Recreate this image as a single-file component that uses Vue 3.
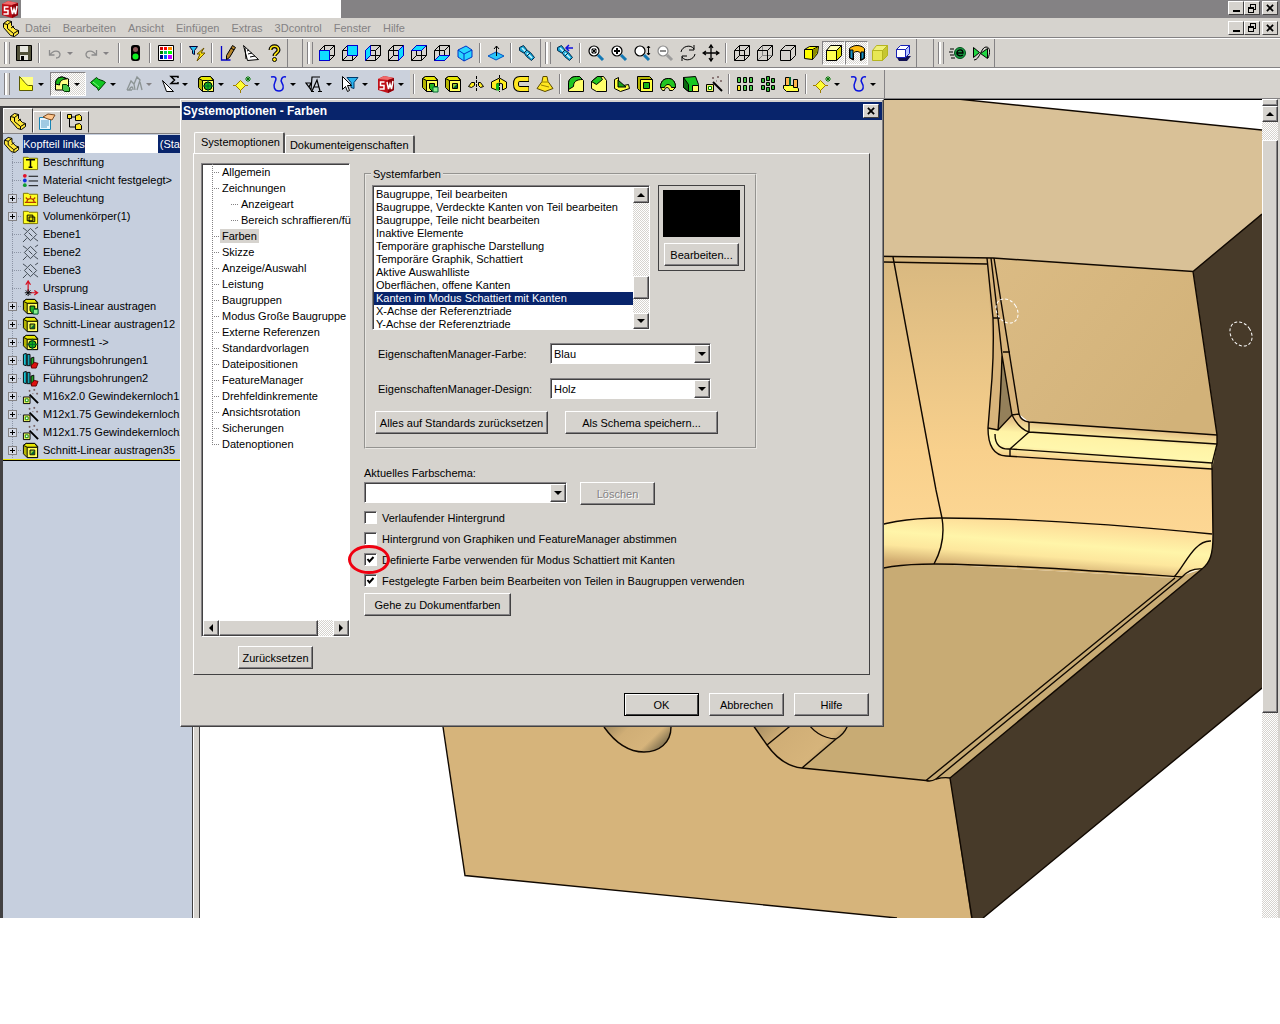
<script setup>
import { ref } from 'vue'

// wire cube with one coloured face
const wire = (face = '', edge = '#0000d0') =>
  `<path d="M1.5 6.5h10v10h-10zM6.5 1.5h10v10h-10zM1.5 6.5l5-5M11.5 6.5l5-5M11.5 16.5l5-5M1.5 16.5l5-5" fill="none" stroke="#000"/>` +
  (face ? `<path d="${face}" fill="#10dcff" stroke="${edge}"/>` : '')

// solid cube: front, top and side
const cube = (front, top, side, line = '#000') =>
  `<path d="M1.5 6.5h10v10h-10z" fill="${front}" stroke="${line}"/><path d="M1.5 6.5l4-5h11l-5 5z" fill="${top}" stroke="${line}"/><path d="M11.5 6.5l5-5v10l-5 5z" fill="${side}" stroke="${line}"/>`

// yellow block seen from the left, used by the feature icons
const block = (inner) =>
  `<path d="M1.5 3.5l3-2h9l3 3v12h-11l-4-4z" fill="#b5b500" stroke="#000"/><path d="M5.5 5.5h11v11h-11z" fill="#ffff5a" stroke="#000"/><path d="M1.5 3.5l3-2h9l3 4h-11z" fill="#e8e800" stroke="#000"/>` + inner

const lens = (inner, c = '#000', h = '#1478b4') =>
  `<circle cx="7" cy="7" r="5" fill="#fff" stroke="${c}" stroke-width="1.2"/><path d="M11 11l5 5" stroke="${h}" stroke-width="3"/>${inner}`

const scope = '<path d="M1.5 3.5l4-2 4 5 3 2 4 5-3 3-5-4-2-3-5-3z" fill="#18a5d6" stroke="#00294a"/><path d="M4 4l4 4M9 9l5 5" stroke="#c6f7ff" stroke-width="1.6"/><path d="M6 9l3-3M9 12l3-3" stroke="#00294a"/>'
const wand = '<path d="M8 7l9 9" stroke="#000" stroke-width="2"/><path d="M1.5 9.5h7v7h-7z" fill="#f4f46a" stroke="#000"/><path d="M3.5 11.5h3v3h-3z" fill="#fff" stroke="#080"/><path d="M7 3h2M8 2v2M12 2h2M13 1v2M15 6h2M16 5v2M11 6h1" stroke="#735a5a"/>'
const part = '<path d="M1.5 4.5l4-3 4 1v4l4 4 3 1v3l-4 3-4-1-7-8z" fill="#ffe73a" stroke="#000"/><path d="M1.5 4.5l4 1 4-3M5.5 5.5v4l6 5 5-3M11.5 14.5v3M9 9l3-2" stroke="#000" fill="none"/>'
const swLogo = '<path d="M1 4l6-3 10 2v12l-6 3L1 15z" fill="#c01018"/><path d="M1 4l6-3 10 2-6 2z" fill="#ef6b6b"/><path d="M11 5l6-2v12l-6 3z" fill="#8f0008"/><path d="M7.5 7h-4v3.5h3.500V14h-4.500M10 7l1.500 7 1.500-5 1.500 5L16 6" stroke="#fff" stroke-width="1.5" fill="none"/>'
const star = '<path d="M7.5 5.5l5 5-5 5-5-5z" fill="#ff3" stroke="#9c7b00"/><path d="M0 10.5h3M12 10.5h3M7.5 15v3" stroke="#9c7b00"/><path d="M12 4h6M15 1v6M13 2l4 4M17 2l-4 4" stroke="#087808"/>'
const curve = '<path d="M2 2c5-1 6 1 4 5s-1 9 4 9 5-5 3-8 0-7 4-6" fill="none" stroke="#0a14e0" stroke-width="1.5"/>'
const plane = '<path d="M9 2.5l6.500 6.500L9 15.500 2.500 9zM1 2l4 3M17 16l-4-3M7 7l4 4M14 3l3-2M1 17l4-4" fill="none" stroke="#39424a"/>'
const extrude = block('<path d="M8.5 8.5h5v3h3v5h-5l-3-3z" fill="#21b521" stroke="#000"/><path d="M12 12h5v5h-5z" fill="#8cf08c" stroke="#063"/>')
const cut = block('<path d="M8.5 8.5h5v5h-5z" fill="#9ccf31" stroke="#000"/><path d="M9 13l4-4v4z" fill="#063"/>')
const cavity = block('<circle cx="11" cy="11" r="4" fill="#18b518" stroke="#000"/><path d="M5 11h12M11 5v12" stroke="#063"/>')
const books = '<path d="M1.5 2.5l3-1v13l-3-1z" fill="#18c5d6" stroke="#000"/><path d="M5.5 2.5h3v12h-3z" fill="#18a5b5" stroke="#000"/><path d="M9.5 6.5l3-1v10h-3z" fill="#21a521" stroke="#000"/><path d="M10 14l3-3 4 1-2 5h-5z" fill="#e01010" stroke="#600"/>'
const folder = (inner) => `<path d="M1.5 3.5h5l1 1h9v12h-15z" fill="#ffff21" stroke="#7b7300"/>${inner}`

const icons = {
  sw: swLogo,
  part,
  save: '<path d="M1.5 1.5h15v15h-15z" fill="#52523a" stroke="#000"/><path d="M5 2h8v6H5zM5 11h8v5H5z" fill="#e7e7e0"/><path d="M6 12h3v4H6z" fill="#000"/>',
  undo: '<path d="M3.5 6v5h5M4 11c3-5 9-5 10-1 0 3-2 4-4 4" fill="none" stroke="#8c8c8c" stroke-width="1.3"/>',
  redo: '<path d="M14.5 6v5h-5M14 11c-3-5-9-5-10-1 0 3 2 4 4 4" fill="none" stroke="#8c8c8c" stroke-width="1.3"/>',
  light: '<rect x="5" y="1" width="9" height="16" rx="3" fill="#000"/><circle cx="9.5" cy="5.5" r="2.5" fill="#8c5a5a"/><circle cx="9.5" cy="12.5" r="3" fill="#10ef21"/>',
  palette: '<path d="M1.5 1.5h15v15h-15z" fill="#fff" stroke="#000"/><path d="M3 3h3v3H3z" fill="#c00"/><path d="M7 3h3v3H7z" fill="#f00"/><path d="M11 3h4v3h-4z" fill="#f80"/><path d="M3 7h3v3H3z" fill="#080"/><path d="M7 7h3v3H7z" fill="#0c6"/><path d="M11 7h4v3h-4z" fill="#0f0"/><path d="M3 11h3v4H3z" fill="#008"/><path d="M7 11h3v4H7z" fill="#06f"/><path d="M11 11h4v4h-4z" fill="#c0f"/>',
  rebuild: '<path d="M1.5 2.5h8l-3 4v4l-2-1v-3z" fill="#29c5f7" stroke="#003"/><path d="M16 4l-7 6h3l-3 7 8-8h-4z" fill="#ffe710" stroke="#6b5200"/>',
  sketch: '<path d="M2.5 2v14h9" fill="none" stroke="#0000c8" stroke-width="1.3"/><path d="M13.5 1.5l3 2-6 10-3 2v-4z" fill="#b58429" stroke="#000"/><path d="M12 4l3 2" stroke="#000"/>',
  ruler: '<path d="M1.5 1.5l15 14-11 1z" fill="#fff" stroke="#000"/><path d="M3 4l1 11M5 7l2-1M6 10l4-1M8 13l5-1" fill="none" stroke="#000"/>',
  help: '<path d="M5.5 6c0-5 8-5 8 0 0 3-4 3-4 6" fill="none" stroke="#000" stroke-width="4"/><path d="M5.5 6c0-5 8-5 8 0 0 3-4 3-4 6" fill="none" stroke="#ffe710" stroke-width="1.6"/><circle cx="9.5" cy="15.5" r="2" fill="#ffe710" stroke="#000"/>',
  front: wire('M1.5 6.5h10v10h-10z'),
  back: wire('M6.5 1.5h10v10h-10z'),
  left: wire('M1.5 6.5l5-5v10l-5 5z'),
  right: wire('M11.5 6.5l5-5v10l-5 5z'),
  top: wire('M1.5 6.5l5-5h10l-5 5z'),
  bottom: wire('M1.5 16.5l5-5h10l-5 5z'),
  iso: '<path d="M2 6l8-4 6 4v7l-8 4-6-4z" fill="#29d6ff" stroke="#0031c6"/><path d="M2 6l6 4 8-4M8 10v7" fill="none" stroke="#0031c6"/>',
  normal: '<path d="M1 12l8-4 8 4-8 4z" fill="#29c5f7" stroke="#0052c6"/><path d="M9.5 12V2M7 5l2.500-3L12 5" fill="none" stroke="#000"/>',
  scope,
  scopeBack: scope + '<path d="M17 4h-6M13 1l-3 3 3 3" stroke="#1010e0" stroke-width="1.5" fill="none"/>',
  zoomFit: lens('<path d="M5 5h4v4H5zM5 5l4 4M9 5L5 9" stroke="#000" fill="none"/>'),
  zoomIn: lens('<path d="M4 7h6M7 4v6" stroke="#000" stroke-width="2"/>'),
  zoomDyn: lens('<path d="M15.5 2v9M14 4l1.500-2L17 4M14 9l1.500 2L17 9" stroke="#000" fill="none"/>'),
  zoomSel: lens('<path d="M4 7h6" stroke="#8c8c8c" stroke-width="2"/>', '#8c8c8c', '#9c9c9c'),
  rotate: '<path d="M2 8c1-6 10-8 13-3M16 10c-1 6-10 8-13 3M15 1v5h-5M3 17v-5h5" fill="none" stroke="#000"/>',
  pan: '<path d="M9 2v14M2 9h14M7 4l2-3 2 3M7 14l2 3 2-3M4 7L1 9l3 2M14 7l3 2-3 2" fill="none" stroke="#000" stroke-width="1.3"/>',
  wireframe: wire(),
  hiddenGray: '<path d="M6.5 1.5v10h10M1.5 16.5l5-5" fill="none" stroke="#848484"/><path d="M1.5 6.5h10v10h-10zM1.5 6.5l5-5h10v10l-5 5M11.5 6.5l5-5" fill="none" stroke="#000"/>',
  hidden: '<path d="M1.5 6.5h10v10h-10zM1.5 6.5l5-5h10v10l-5 5M11.5 6.5l5-5" fill="none" stroke="#000"/>',
  shadedEdge: '<path d="M2.5 5.5l5-3h9l-1 7-5 6-8-1z" fill="#ffff00" stroke="#000"/><path d="M2.5 5.5h8v10M10.5 5.5l6-3" fill="none" stroke="#000"/><path d="M11 6l5-3-1 6-4 5z" fill="#8c8c00"/>',
  shaded: cube('#ffff52', '#ffffb5', '#dede00'),
  section: '<path d="M1.5 4.5c4-4 11-4 15 0v10l-4 2V9c-2-2-5-2-7 0v7l-4-2z" fill="#ffbd10" stroke="#000"/><path d="M2 6h3v9l-3-1zM13 8h3v6l-3 2z" fill="#1894c6" stroke="#000"/>',
  shadow: cube('#e7e754', '#f0f07a', '#c6c631', '#b5b521'),
  shadowFloor: '<path d="M2 12h15l-4 5H5z" fill="#101052"/><path d="M2.500 5.500h9v8h-9z" fill="#fff" stroke="#1821b5"/><path d="M2.500 5.500l4-4h9l-4 4z" fill="#fff" stroke="#1821b5"/><path d="M11.500 5.500l4-4v8l-4 4z" fill="#b5c6ff" stroke="#1821b5"/>',
  edraw: '<circle cx="11" cy="9" r="5.5" fill="#189c42" stroke="#00521b"/><path d="M8 9h6c0-4-5-4-6-1s3 5 6 3" stroke="#000" fill="none" stroke-width="1.3"/><path d="M1 5h4M0 8h4M1 11h4M2 14h4" stroke="#000"/>',
  animate: '<path d="M1.500 3.500v10l6-5zM8.500 9.500l7-5v10z" fill="#21d642" stroke="#000"/><path d="M2 16c6 0 7-13 12-13s4 7 2 11" fill="none" stroke="#000"/>',
  sketchYellow: '<path d="M2 2h14v14H2z" fill="#ffff84"/><path d="M2.500 1.500v14h13v-5h-4c-2 0-5-5-9-9z" fill="#ffff21" stroke="#5a5a00"/>',
  feature: '<path d="M2.500 9c0-5 3-7 7-7l6 2v8l-4 3h-9z" fill="#ffff84" stroke="#000"/><path d="M2.500 9c0-5 3-7 7-7l4 2c-4 0-7 2-7 6z" fill="#18b518" stroke="#000"/><path d="M9.500 9.500h4l3 3v4h-5l-2-2z" fill="#4ac64a" stroke="#003900"/>',
  surface: '<path d="M1.500 7.500l6-5c2 3 6 2 9 5l-7 8c-1-4-5-4-8-8z" fill="#10c621" stroke="#003900"/><path d="M4 7l6 5" stroke="#7bff7b"/>',
  mold: '<path d="M2 15l4-9 3 3 3-7 3 3-3 10M4 15c2-4 4-4 4 0M15 7l2 8M2 15h5M9 9l1 6" fill="none" stroke="#8c9494" stroke-width="1.3"/>',
  sigma: '<path d="M1.500 5.500l11 11h-7z" fill="#fff" stroke="#000"/><path d="M17 3V1.500h-7l3.500 3.500-3.500 3.500h7V7" fill="none" stroke="#000" stroke-width="1.5"/>',
  cavity,
  star,
  curve,
  annot: '<path d="M1 8h5l-2 4zM4 12l2 3 1-13h8M7 16l5-11 3 11M9 12h5M6 16.500h3M13 16.500h4" fill="none" stroke="#000" stroke-width="1.2"/>',
  filter: '<path d="M6 2.500h11l-4 5v6l-3-1v-5z" fill="#29b5ef" stroke="#00396b"/><path d="M1.500 1.500v13l3-3 2 5 2-1-2-5h4z" fill="#fff" stroke="#000"/>',
  extrude,
  cut,
  revolve: '<path d="M1.500 11.500l3-4h3v3l-3 2zM11.500 7.500h2l3 4-3 1-2-2z" fill="#ffef21" stroke="#000"/><path d="M9.500 1v16" stroke="#000" stroke-dasharray="3 1"/>',
  revolveCut: '<path d="M1.500 7l8-4 7 4v6l-4 2V9l-3-1-3 1v6l-5-2z" fill="#ffef21" stroke="#000"/><path d="M6 9l3-1v8l-3-1z" fill="#18b518"/><path d="M9.500 0v17" stroke="#000" stroke-dasharray="3 1"/>',
  sweep: '<path d="M16 4H7c-3 0-4 2-4 5s1 5 4 5h9" fill="none" stroke="#000" stroke-width="6"/><path d="M15.500 4H7c-3 0-4 2-4 5s1 5 4 5h8.500" fill="none" stroke="#ffe721" stroke-width="4"/>',
  loft: '<path d="M7 1.500h4l1 5 5 7-8 3-8-3 5-7z" fill="#ffe721" stroke="#5a4a00"/><path d="M6 7h6M5 10l8 2" stroke="#9c8400"/>',
  fillet: '<path d="M1.500 9c0-5 3-7.500 8-7.500h3l4 4v11h-15z" fill="#ffff6b" stroke="#000"/><path d="M1.500 9c0-5 3-7.500 8-7.500h3l3 3c-6 0-9 2-9 7l-5 3z" fill="#21c621" stroke="#000"/>',
  chamfer: '<path d="M1.500 6.500l6-5h6l3 4v11h-10l-5-3z" fill="#ffff6b" stroke="#000"/><path d="M1.500 6.500l6-5h3l2 3-6 5z" fill="#21c621" stroke="#000"/>',
  rib: '<path d="M1.500 4.500l4-2v9l10-2 1 4-9 3-6-3z" fill="#ffff42" stroke="#000"/><path d="M5 12V5l8 7z" fill="#18a518" stroke="#000"/>',
  shell: '<path d="M1.500 1.500h12l3 3v12h-12l-3-3z" fill="#b5b500" stroke="#000"/><path d="M4.500 4.500h12v12h-12z" fill="#ffff42" stroke="#000"/><path d="M7.500 7.500h6v6h-6z" fill="#18b518" stroke="#000"/>',
  dome: '<path d="M1.500 12.500c0-6 3-9 8-9 4 0 7 3 7 9l-3 3h-3c0-4-5-4-5 0h-2z" fill="#ffff42" stroke="#000"/><path d="M1.500 12.500c0-6 3-9 8-9 4 0 7 3 7 9h-4c-1-4-6-4-7 0z" fill="#21c621" stroke="#000"/>',
  draft: '<path d="M1.500 2.500l12-1 3 8v7h-10l-5-4z" fill="#18c621" stroke="#000"/><path d="M1.500 2.500l5 7v7l-5-4z" fill="#086b10" stroke="#000"/><path d="M10.500 10.500h6v6h-6z" fill="#ffff6b" stroke="#000"/>',
  wand,
  linPattern: [1, 7, 13].map((x) => `<path d="M${x}.500 2.500h3v5h-3zM${x}.500 10.500h3v5h-3z" fill="#4ac64a" stroke="#000"/>`).join('') + '<path d="M2 11h2v4H2z" fill="#ffe721"/>',
  circPattern: '<path d="M7.500 1.500h3v4h-3zM7.500 12.500h3v4h-3zM2.500 3.500h3v4h-3zM12.500 3.500h3v4h-3zM2.500 10.500h3v4h-3zM12.500 10.500h3v4h-3zM7.500 7.500h3v3h-3z" fill="#31b531" stroke="#000"/>',
  mirror: '<path d="M1.500 10.500h11l4 3v3h-12l-3-3z" fill="#ffff42" stroke="#000"/><path d="M3.500 2.500h4v8h-4zM11.500 4.500h4v8h-4z" fill="#ffb54a" stroke="#000"/><path d="M8 2v9" stroke="#063" stroke-width="2"/>',
  tabProps: '<path d="M1.500 4.500h11v12h-11z" fill="#e7f7ff" stroke="#1884b5"/><path d="M3 8h8M3 10h8M3 12h8M3 14h6" stroke="#5a9cc6"/><path d="M5 4l5-3 7 1-3 5-4-1z" fill="#ffc68c" stroke="#7b4a21"/>',
  tabConf: '<path d="M3.500 2v12h6M3.500 4h6" fill="none" stroke="#000"/><path d="M1.500 1.500h4v4h-4zM9.500 2.500l4-1 2 2v4h-6zM9.500 11.500l4-1 2 2v4h-6z" fill="#ffe721" stroke="#000"/>',
  note: folder('<path d="M5 7V6h8v1M9 6v8M7 14h4" fill="none" stroke="#000" stroke-width="1.6"/>'),
  material: '<path d="M7 4.500h10M7 9.500h10M7 14.500h10" stroke="#000"/><circle cx="3" cy="4" r="2" fill="#e01029"/><circle cx="3" cy="9" r="2" fill="#1031e0"/><circle cx="3" cy="14" r="2" fill="#109c31"/>',
  lights: folder('<path d="M3 13h12M5 13c1-5 7-5 8 0M9 6v3M4 8l2 2M14 8l-2 2" fill="none" stroke="#b53900" stroke-width="1.3"/>'),
  bodies: folder('<path d="M5.500 7.500h6v6h-6zM7.500 9.500h6v5h-6z" fill="#dede00" stroke="#000"/>'),
  plane,
  origin: '<path d="M6.500 12V2M4 5l2.500-4L9 5M8 13.500h8M13 11l3.500 2.500L13 16" fill="none" stroke="#d61021" stroke-width="1.3"/><path d="M4 11l5 5M9 11l-5 5M6.500 10v7M3 13.500h7" stroke="#000"/>',
  books
}

const menus = ['Datei', 'Bearbeiten', 'Ansicht', 'Einfügen', 'Extras', '3Dcontrol', 'Fenster', 'Hilfe']

// '|' is a separator, '+' adds a drop arrow, '!' is a pressed button
const bands = [
  { id: 'std', tools: ['save', '|', 'undo+', 'redo+', '|', 'light', '|', 'palette', '|', 'rebuild', '|', 'sketch', 'ruler', 'help'] },
  { id: 'views', tools: ['front', 'back', 'left', 'right', 'top', 'bottom', 'iso', '|', 'normal', '|', 'scope'] },
  { id: 'view', tools: ['scopeBack', '|', 'zoomFit', 'zoomIn', 'zoomDyn', 'zoomSel', 'rotate', 'pan', '|', 'wireframe', 'hiddenGray', 'hidden', 'shadedEdge', 'shaded!', 'section!', 'shadow', 'shadowFloor'] },
  { id: 'edraw', tools: ['edraw', 'animate'] }
]
const commandTools = ['sketchYellow+', 'feature+!', 'surface+', 'mold+', 'sigma+', 'cavity+', 'star+', 'curve+', 'annot+', 'filter+', 'sw+']
const partTools = ['|', 'extrude', 'cut', 'revolve', 'revolveCut', 'sweep', 'loft', '|', 'fillet', 'chamfer', 'rib', 'shell', 'dome', 'draft', 'wand', '|', 'linPattern', 'circPattern', 'mirror', '|', 'star+', 'curve+']

const parse = (list) => list.map((t) => ({ sep: t === '|', name: t.replace(/[+!]/g, ''), drop: t.includes('+'), on: t.includes('!') }))
const row1 = bands.map((b) => ({ id: b.id, tools: parse(b.tools) }))
const row2 = [
  { id: 'command', tools: parse(commandTools) },
  { id: 'parttools', tools: parse(partTools) }
]

const features = [
  { icon: 'note', text: 'Beschriftung' },
  { icon: 'material', text: 'Material <nicht festgelegt>' },
  { icon: 'lights', text: 'Beleuchtung', plus: true },
  { icon: 'bodies', text: 'Volumenkörper(1)', plus: true },
  { icon: 'plane', text: 'Ebene1' },
  { icon: 'plane', text: 'Ebene2' },
  { icon: 'plane', text: 'Ebene3' },
  { icon: 'origin', text: 'Ursprung' },
  { icon: 'extrude', text: 'Basis-Linear austragen', plus: true },
  { icon: 'cut', text: 'Schnitt-Linear austragen12', plus: true },
  { icon: 'cavity', text: 'Formnest1 ->', plus: true },
  { icon: 'books', text: 'Führungsbohrungen1', plus: true },
  { icon: 'books', text: 'Führungsbohrungen2', plus: true },
  { icon: 'wand', text: 'M16x2.0 Gewindekernloch1', plus: true },
  { icon: 'wand', text: 'M12x1.75 Gewindekernloch1', plus: true },
  { icon: 'wand', text: 'M12x1.75 Gewindekernloch2', plus: true },
  { icon: 'cut', text: 'Schnitt-Linear austragen35', plus: true }
]

const pages = [
  'Allgemein', 'Zeichnungen', '>Anzeigeart', '>Bereich schraffieren/fü', 'Farben', 'Skizze', 'Anzeige/Auswahl',
  'Leistung', 'Baugruppen', 'Modus Große Baugruppe', 'Externe Referenzen', 'Standardvorlagen', 'Dateipositionen',
  'FeatureManager', 'Drehfeldinkremente', 'Ansichtsrotation', 'Sicherungen', 'Datenoptionen'
].map((p) => ({ text: p.replace('>', ''), sub: p.startsWith('>') }))
const page = ref('Farben')

const colors = [
  'Baugruppe, Teil bearbeiten', 'Baugruppe, Verdeckte Kanten von Teil bearbeiten', 'Baugruppe, Teile nicht bearbeiten',
  'Inaktive Elemente', 'Temporäre graphische Darstellung', 'Temporäre Graphik, Schattiert', 'Aktive Auswahlliste',
  'Oberflächen, offene Kanten', 'Kanten im Modus Schattiert mit Kanten', 'X-Achse der Referenztriade', 'Y-Achse der Referenztriade'
]
const color = ref('Kanten im Modus Schattiert mit Kanten')

const checks = ref([
  { id: 'grad', text: 'Verlaufender Hintergrund', on: false },
  { id: 'match', text: 'Hintergrund von Graphiken und FeatureManager abstimmen', on: false },
  { id: 'edges', text: 'Definierte Farbe verwenden für Modus Schattiert mit Kanten', on: true, marked: true },
  { id: 'fixed', text: 'Festgelegte Farben beim Bearbeiten von Teilen in Baugruppen verwenden', on: true }
])
</script>

<template>
  <div class="screen">
    <div class="app">
      <header class="titlebar">
        <svg class="icon" viewBox="0 0 18 18" v-html="icons.sw"></svg>
        <span class="blank"></span>
        <div class="winbtns">
          <button class="winbtn" aria-label="Minimieren"><i class="min"></i></button>
          <button class="winbtn" aria-label="Wiederherstellen"><i class="res"></i></button>
          <button class="winbtn close" aria-label="Schließen"><svg viewBox="0 0 9 9"><path d="M1 1l7 7M8 1L1 8" /></svg></button>
        </div>
      </header>

      <nav class="menubar">
        <svg class="icon" viewBox="0 0 18 18" v-html="icons.part"></svg>
        <button v-for="m in menus" :key="m" class="menu">{{ m }}</button>
        <div class="winbtns">
          <button class="winbtn" aria-label="Dokument minimieren"><i class="min"></i></button>
          <button class="winbtn" aria-label="Dokument wiederherstellen"><i class="res"></i></button>
          <button class="winbtn close" aria-label="Dokument schließen"><svg viewBox="0 0 9 9"><path d="M1 1l7 7M8 1L1 8" /></svg></button>
        </div>
      </nav>

      <div class="toolrow">
        <div v-for="b in row1" :key="b.id" class="band" :class="b.id">
          <template v-for="(t, i) in b.tools" :key="i">
            <span v-if="t.sep" class="sep"></span>
            <button v-else class="tool" :class="{ on: t.on, drop: t.drop }" :aria-label="t.name">
              <svg viewBox="0 0 18 18" v-html="icons[t.name]"></svg>
              <i v-if="t.drop" class="caret dim"></i>
            </button>
          </template>
        </div>
      </div>
      <div class="toolrow second">
        <div v-for="b in row2" :key="b.id" class="band" :class="b.id">
          <template v-for="(t, i) in b.tools" :key="i">
            <span v-if="t.sep" class="sep"></span>
            <button v-else class="tool" :class="{ on: t.on, drop: t.drop }" :aria-label="t.name">
              <svg viewBox="0 0 18 18" v-html="icons[t.name]"></svg>
              <i v-if="t.drop" class="caret" :class="{ dim: t.name === 'mold' }"></i>
            </button>
          </template>
        </div>
      </div>

      <main class="work">
        <aside class="side">
          <div class="sidetabs">
            <button class="sidetab active" aria-label="FeatureManager"><svg viewBox="0 0 18 18" v-html="icons.part"></svg></button>
            <button class="sidetab" aria-label="PropertyManager"><svg viewBox="0 0 18 18" v-html="icons.tabProps"></svg></button>
            <button class="sidetab" aria-label="ConfigurationManager"><svg viewBox="0 0 18 18" v-html="icons.tabConf"></svg></button>
          </div>
          <div class="root">
            <svg viewBox="0 0 18 18" v-html="icons.part"></svg>
            <span class="rootname">Kopfteil links<span class="blank"></span>(Sta</span>
          </div>
          <ul class="features">
            <li v-for="f in features" :key="f.text">
              <span class="branch"><b v-if="f.plus" class="plus"></b></span>
              <svg viewBox="0 0 18 18" v-html="icons[f.icon]"></svg>
              <span>{{ f.text }}</span>
            </li>
          </ul>
        </aside>
        <div class="splitter"></div>

        <svg class="model" viewBox="200 100 1062 818" preserveAspectRatio="xMinYMin slice">
          <defs>
            <linearGradient id="wall" x1="0" y1="0" x2="0" y2="1">
              <stop offset="0" stop-color="#d8b880" />
              <stop offset=".7" stop-color="#f8d08c" />
              <stop offset="1" stop-color="#fdd794" />
            </linearGradient>
            <linearGradient id="back" x1="0" y1="0" x2="1" y2=".6">
              <stop offset="0" stop-color="#dbbb84" />
              <stop offset="1" stop-color="#d2b279" />
            </linearGradient>
            <linearGradient id="round" gradientUnits="userSpaceOnUse" x1="1040" y1="518" x2="1036" y2="572">
              <stop offset="0" stop-color="#fdd794" />
              <stop offset=".45" stop-color="#fff5a9" />
              <stop offset=".7" stop-color="#fde79d" />
              <stop offset="1" stop-color="#d0ab70" />
            </linearGradient>
            <linearGradient id="groove" gradientUnits="userSpaceOnUse" x1="1110" y1="427" x2="1107" y2="464">
              <stop offset="0" stop-color="#e5c187" />
              <stop offset=".35" stop-color="#fff3a6" />
              <stop offset=".7" stop-color="#fff7ad" />
              <stop offset="1" stop-color="#f5cd89" />
            </linearGradient>
            <linearGradient id="hole" x1="0" y1="0" x2="1" y2=".5">
              <stop offset="0" stop-color="#94805a" />
              <stop offset=".4" stop-color="#d0ae76" />
              <stop offset=".8" stop-color="#d6b47b" />
              <stop offset="1" stop-color="#8c7a56" />
            </linearGradient>
          </defs>
          <path fill="#d6b47b" d="M438 690L465 875.500 897 918h76L950 778 900 690z" />
          <path fill="#d9c197" d="M700 99h257l305 31v84l-69 57.500L993 258l-293-4z" />
          <path fill="#473a29" d="M1262 214l-69 57.500L1217 435v9l-5 20 1 72c0 18-3 27-11 33L950 778l21 140h12l279-230z" />
          <path fill="url(#wall)" d="M860 256l133 2 20 180 199 31 1 66-271-17-82 12z" />
          <path fill="url(#back)" d="M994 258l199 13.500L1217 435l-188-13-10-8z" />
          <path fill="#c8ab74" d="M860 575c20-8 40-11 75-11l240 14 27-9L950 778l-14 1q-5 3-10 1.500L802 768l34-29 14-20z" />
          <path fill="url(#round)" d="M860 532c20-9 50-14 82-14 80 0 180 7 270 16 2 16-1 30-11 36q-10-1-20 8l-6 0-240-14c-35 0-55 3-75 11z" />
          <path fill="url(#groove)" d="M1019 414q2 7 10 8l188 13v9l-5 25-206-13q-18-1-18-28l5-70 1-40-7-60h7z" />
          <path fill="#d8b47b" d="M987 258h7l25 156-7 1-14 15-10-1 5-71z" />
          <path fill="#94805a" d="M1002 355l10 59-14 15z" />
          <path fill="url(#hole)" d="M604 720v7c10 14 24 25 40 25 15 0 27-9 27-25v-7z" />
          <path fill="url(#hole)" d="M748 718l6 9c9 14 22 39 48 41l34-29 14-21z" />
          <g class="edges">
            <path d="M442 720L465 875.500 897 918M957 99l305 31M860 256l133 2 200 13.500 69-57.500M1193 271.500L1217 435v9l-5 20 1 72c0 18-3 27-11 33L950 778l22 140M983 918l279-230" />
            <path d="M884 262l103 2M893 257l43 233 6 28M942 518q4 24-8 46" />
            <path d="M987 258l6 60q1 30-1 60l-4 50q0 27 18 28l206 13" />
            <path d="M991 258l7 60 4 37q-1 40-4 75M994 258l10 62 15 94q2 7 10 8l188 13M1002 355l10 60M993 318h7M1003 352h7M988 428l10 2 14-15 7-1" />
            <path d="M1029 422v10l188 12M1012 415q7 14 17 17l-19 17 202 14M995 434q0 16 15 15M1010 449v7" />
            <path d="M860 532c20-9 50-14 82-14 80 0 180 7 270 16M860 575c20-8 40-11 75-11 80 1 160 7 247 13" />
            <path d="M1174 577c10-10 20-37 37-36M1175 578L926 780.500M1182 577L936 779M1182 577q8-9 20-8" />
            <path d="M950 778q-6-1-14 1-5 3-10 1.500L802 768q-20-2-35-23l-19-27M800 718l-33 27M802 768l34-29q8-5 11-12v-7M804 718q12 20 32 21" />
            <path d="M604 727c10 14 24 25 40 25 15 0 27-9 27-25" />
          </g>
          <g class="marks">
            <ellipse cx="1007" cy="311" rx="10" ry="13" transform="rotate(-35 1007 311)" />
            <ellipse cx="1241" cy="334" rx="10" ry="13" transform="rotate(-35 1241 334)" />
          </g>
        </svg>

        <div class="vscroll viewscroll">
          <span class="splitbox"></span>
          <button class="sbtn" aria-label="Ansicht nach oben"><i class="up"></i></button>
          <span class="thumb"></span>
        </div>
      </main>

      <section class="dialog" role="dialog" aria-labelledby="dlgtitle">
        <div class="dlgbar">
          <h1 id="dlgtitle">Systemoptionen - Farben</h1>
          <button class="winbtn" aria-label="Dialog schließen"><svg viewBox="0 0 9 9"><path d="M1 1l7 7M8 1L1 8" /></svg></button>
        </div>
        <div class="tabs" role="tablist">
          <button class="tab active" role="tab" aria-selected="true">Systemoptionen</button>
          <button class="tab" role="tab" aria-selected="false">Dokumenteigenschaften</button>
        </div>
        <div class="panel">
          <div class="pagecol">
            <div class="pagebox">
              <ul class="pages">
                <li v-for="p in pages" :key="p.text" :class="{ sub: p.sub }">
                  <button :class="{ active: p.text === page }" @click="page = p.text">{{ p.text }}</button>
                </li>
              </ul>
              <div class="hscroll">
                <button class="sbtn" aria-label="Nach links"><i class="lt"></i></button>
                <span class="thumb"></span>
                <button class="sbtn" aria-label="Nach rechts"><i class="rt"></i></button>
              </div>
            </div>
            <button class="btn">Zurücksetzen</button>
          </div>

          <div class="settings">
            <fieldset>
              <legend>Systemfarben</legend>
              <div class="pick">
                <div class="listbox">
                  <ul role="listbox" aria-label="Systemfarben">
                    <li v-for="c in colors" :key="c" role="option" :aria-selected="c === color" @click="color = c">{{ c }}</li>
                  </ul>
                  <div class="vscroll">
                    <button class="sbtn" aria-label="Liste nach oben"><i class="up"></i></button>
                    <span class="thumb"></span>
                    <button class="sbtn" aria-label="Liste nach unten"><i class="dn"></i></button>
                  </div>
                </div>
                <div class="swatchbox">
                  <div class="swatch"></div>
                  <button class="btn">Bearbeiten...</button>
                </div>
              </div>
              <div class="field">
                <label for="pmcolor">EigenschaftenManager-Farbe:</label>
                <span class="combo"><select id="pmcolor"><option>Blau</option></select><i class="dn"></i></span>
              </div>
              <div class="field">
                <label for="pmskin">EigenschaftenManager-Design:</label>
                <span class="combo"><select id="pmskin"><option>Holz</option></select><i class="dn"></i></span>
              </div>
              <div class="actions">
                <button class="btn">Alles auf Standards zurücksetzen</button>
                <button class="btn">Als Schema speichern...</button>
              </div>
            </fieldset>

            <label class="schemelabel" for="scheme">Aktuelles Farbschema:</label>
            <div class="scheme">
              <span class="combo"><select id="scheme"><option></option></select><i class="dn"></i></span>
              <button class="btn" disabled>Löschen</button>
            </div>
            <div class="checks">
              <label v-for="c in checks" :key="c.id" :class="{ marked: c.marked }" :for="c.id">
                <input :id="c.id" v-model="c.on" type="checkbox" />
                <span>{{ c.text }}</span>
              </label>
            </div>
            <button class="btn goto">Gehe zu Dokumentfarben</button>
          </div>
        </div>
        <footer class="dlgfoot">
          <button class="btn default">OK</button>
          <button class="btn">Abbrechen</button>
          <button class="btn">Hilfe</button>
        </footer>
      </section>
    </div>
  </div>
</template>

<style>
body {
  margin: 0;
  background: #fff;
}
</style>

<style scoped>
*,
*::before,
*::after {
  box-sizing: border-box;
}

.screen {
  display: flex;
  min-height: 100vh;
  padding-bottom: 106px;
  font: 11px/14px "Liberation Sans", Arial, sans-serif;
  color: #000;
}

.app {
  position: relative;
  display: flex;
  flex: 1;
  flex-direction: column;
  min-width: 0;
  overflow: hidden;
  background: #d6d3ce;
}

button {
  padding: 0;
  border: 0;
  background: none;
  font: inherit;
  color: inherit;
}

ul {
  margin: 0;
  padding: 0;
  list-style: none;
}

h1 {
  margin: 0;
  font-size: 12px;
  line-height: 18px;
}

/* title and menu */
.titlebar {
  display: flex;
  height: 18px;
  background: #848284;
}

.icon {
  flex: none;
  width: 18px;
  height: 18px;
  margin: 0 2px 0 1px;
}

.titlebar .blank {
  width: 25%;
  background: #fff;
}

.winbtns {
  display: flex;
  margin-left: auto;
  padding: 1px 2px;
}

.winbtn {
  display: flex;
  align-items: center;
  justify-content: center;
  width: 16px;
  height: 14px;
  border: 1px solid;
  border-color: #fff #424142 #424142 #fff;
  background: #d6d3ce;
}

.winbtn.close {
  margin-left: 2px;
}

.winbtn svg {
  width: 8px;
  height: 8px;
  fill: none;
  stroke: #000;
  stroke-width: 2;
}

.min {
  width: 7px;
  height: 8px;
  border-bottom: 2px solid #000;
}

.res {
  width: 6px;
  height: 6px;
  margin: 3px 3px 0 0;
  border: 1px solid #000;
  border-top-width: 2px;
  box-shadow: 2px -3px 0 -1px #d6d3ce, 2px -3px 0 0 #000;
}

.menubar {
  display: flex;
  align-items: center;
  height: 20px;
  border-bottom: 1px solid #848284;
}

.menubar .icon {
  margin: 0 2px;
}

.menu {
  padding: 0 6px 0 5px;
  margin-right: 3px;
  margin-left: -2px;
  color: #848284;
}

/* toolbars */
.toolrow {
  display: flex;
  height: 30px;
  border-top: 1px solid #fff;
  border-bottom: 1px solid #848284;
}

.toolrow.second {
  height: 31px;
  border-top-width: 2px;
}

.band {
  position: relative;
  display: flex;
  align-items: center;
  padding: 0 2px 0 12px;
  border-right: 1px solid #848284;
}

.band::before {
  position: absolute;
  top: 3px;
  bottom: 3px;
  left: 4px;
  width: 6px;
  border: solid #848284;
  border-width: 0 1px;
  background: linear-gradient(90deg, #fff 50%, #d6d3ce 50%);
  content: "";
}

.band.views {
  margin-left: 14px;
  border-left: 1px solid #848284;
}

.band.edraw {
  margin-left: 16px;
  border-left: 1px solid #848284;
}

.band.command {
  padding: 0 0 0 14px;
  border: 0;
  background: #cbd1dc;
}

.band.parttools {
  padding-left: 0;
}

.band.parttools::before {
  display: none;
}

.tool {
  display: flex;
  align-items: center;
  justify-content: center;
  width: 23px;
  height: 24px;
}

.tool.drop {
  width: 36px;
}

.tool svg {
  flex: none;
  width: 18px;
  height: 18px;
}

.tool.on {
  border: 1px solid;
  border-color: #848284 #fff #fff #848284;
  background: repeating-conic-gradient(#fff 0 25%, #d6d3ce 0 50%) 0 0 / 2px 2px;
}

.caret {
  width: 0;
  margin: 0 4px 0 3px;
  border: 3px solid transparent;
  border-top-color: #000;
  border-bottom: 0;
}

.caret.dim {
  border-top-color: #848284;
}

.sep {
  width: 2px;
  height: 20px;
  margin: 0 3px;
  border-left: 1px solid #848284;
  border-right: 1px solid #fff;
}

/* work area */
.work {
  display: flex;
  flex: 1;
  min-height: 0;
}

.side {
  display: flex;
  flex: none;
  flex-direction: column;
  width: 193px;
  margin-top: 7px;
  border: solid #424142;
  border-width: 2px 1px 0 3px;
  background: #c6cfde;
}

.sidetabs {
  display: flex;
  align-items: flex-end;
  height: 26px;
  border-bottom: 1px solid #848284;
  background: #d6d3ce;
}

.sidetab {
  width: 28px;
  height: 22px;
  border: 1px solid;
  border-color: #fff #424142 transparent #fff;
}

.sidetab.active {
  width: 30px;
  height: 25px;
}

.sidetab svg {
  display: block;
  width: 18px;
  height: 18px;
  margin: 0 auto;
}

.root,
.features li {
  display: flex;
  align-items: center;
  height: 18px;
  white-space: nowrap;
}

.root svg,
.features svg {
  flex: none;
  width: 17px;
  height: 17px;
}

.root {
  margin-top: 1px;
}

.rootname {
  display: flex;
  flex: 1;
  align-items: center;
  height: 18px;
  margin-left: 3px;
  background: #08246b;
  color: #fff;
}

.rootname .blank {
  width: 73px;
  height: 18px;
  margin-right: 2px;
  background: #fff;
}

.features {
  border-bottom: 1px solid #e8e000;
  box-shadow: 0 1px #000;
}

.features svg {
  margin-right: 4px;
}

.branch {
  display: flex;
  flex: none;
  align-items: center;
  width: 19px;
  height: 18px;
  padding-left: 5px;
  background:
    repeating-linear-gradient(#8c94a5 0 1px, transparent 1px 2px) 9px 0 / 1px 18px no-repeat,
    repeating-linear-gradient(90deg, #8c94a5 0 1px, transparent 1px 2px) 9px 9px / 10px 1px no-repeat;
}

.plus {
  width: 9px;
  height: 9px;
  border: 1px solid #848284;
  background:
    linear-gradient(#000, #000) 1px 3px / 5px 1px no-repeat,
    linear-gradient(#000, #000) 3px 1px / 1px 5px no-repeat,
    #d6dbe7;
}

.splitter {
  flex: none;
  width: 7px;
  border-right: 1px solid #424142;
  box-shadow: inset 1px 0 #fff;
}

.model {
  display: block;
  flex: 1;
  min-width: 0;
  height: 100%;
  border-top: 1px solid #000;
  background: #fff;
}

.edges {
  fill: none;
  stroke: #100800;
  stroke-width: 1.4;
}

.marks {
  fill: none;
  stroke: #fff;
  stroke-dasharray: 3 2;
}

/* scroll bars */
.vscroll {
  display: flex;
  flex: none;
  flex-direction: column;
  width: 16px;
  background: repeating-conic-gradient(#fff 0 25%, #d6d3ce 0 50%) 0 0 / 2px 2px;
}

.sbtn,
.thumb,
.splitbox {
  flex: none;
  border: 1px solid;
  border-color: #fff #424142 #424142 #fff;
  background: #d6d3ce;
  box-shadow: inset -1px -1px #848284;
}

.sbtn {
  display: flex;
  align-items: center;
  justify-content: center;
  width: 16px;
  height: 16px;
}

.up,
.dn,
.lt,
.rt {
  width: 0;
  border: 4px solid transparent;
}

.up {
  border-top: 0;
  border-bottom-color: #000;
}

.dn {
  border-top-color: #000;
  border-bottom: 0;
}

.lt {
  border-left: 0;
  border-right-color: #000;
}

.rt {
  border-right: 0;
  border-left-color: #000;
}

.viewscroll {
  margin-right: 2px;
}

.splitbox {
  height: 7px;
}

.viewscroll .thumb {
  height: 70%;
  margin-top: 18px;
}

/* dialog */
.dialog {
  position: absolute;
  top: 99px;
  left: 180px;
  width: 704px;
  padding: 2px 1px 10px;
  border: 1px solid;
  border-color: #fff #424142 #424142 #fff;
  background: #d6d3ce;
  box-shadow: inset -1px -1px #848284;
}

.dlgbar {
  display: flex;
  align-items: center;
  justify-content: space-between;
  padding: 0 3px 0 1px;
  background: #08246b;
  color: #fff;
}

.tabs {
  display: flex;
  align-items: flex-end;
  margin: 12px 12px 0;
}

.tab {
  height: 18px;
  padding: 0 4px;
  border: solid;
  border-width: 1px 2px 0 1px;
  border-color: #fff #525152 #fff #fff;
  border-radius: 2px 2px 0 0;
}

.tab.active {
  height: 21px;
  padding: 0 3px 2px 6px;
}

.panel {
  display: flex;
  gap: 14px;
  margin: 0 12px 0 11px;
  padding: 9px 7px 5px;
  border: 1px solid;
  border-color: #fff #424142 #424142 #fff;
}

.pagecol {
  display: flex;
  flex: none;
  flex-direction: column;
  align-items: center;
  gap: 9px;
  width: 149px;
}

.pagebox {
  display: flex;
  flex: 1;
  flex-direction: column;
  width: 100%;
  min-height: 474px;
  border: 1px solid;
  border-color: #848284 #fff #fff #848284;
  background: #fff;
  box-shadow: inset 1px 1px #424142;
}

.pages {
  flex: 1;
  padding-left: 10px;
}

.pages li {
  display: flex;
  align-items: center;
  height: 16px;
  background:
    repeating-linear-gradient(#848284 0 1px, transparent 1px 2px) 0 0 / 1px 16px no-repeat,
    repeating-linear-gradient(90deg, #848284 0 1px, transparent 1px 2px) 0 8px / 8px 1px no-repeat;
}

.pages li:last-child {
  background-size: 1px 9px, 8px 1px;
}

.pages li.sub {
  padding-left: 19px;
  background-position: 0 0, 19px 8px;
}

.pages button {
  padding: 0 2px;
  margin-left: 8px;
  white-space: nowrap;
}

.pages li.sub button {
  padding-right: 0;
}

.pages button.active {
  background: #d6d3ce;
}

.hscroll {
  display: flex;
  flex: none;
  margin-left: 1px;
  background: repeating-conic-gradient(#fff 0 25%, #d6d3ce 0 50%) 0 0 / 2px 2px;
}

.hscroll .thumb {
  width: 99px;
  margin-right: auto;
}

.btn {
  min-width: 75px;
  height: 23px;
  padding: 0 3px;
  border: 1px solid;
  border-color: #fff #424142 #424142 #fff;
  background: #d6d3ce;
  box-shadow: inset -1px -1px #848284;
  white-space: nowrap;
}

.btn:disabled {
  color: #848284;
  text-shadow: 1px 1px #fff;
}

.btn.default {
  border-color: #000;
  box-shadow: inset 1px 1px #fff, inset -1px -1px #424142;
}

.settings {
  display: flex;
  flex-direction: column;
  align-items: flex-start;
  padding-top: 4px;
}

fieldset {
  width: 393px;
  margin: 0;
  padding: 4px 6px 13px;
  border: 2px groove #e8e6e2;
}

legend {
  margin-left: -1px;
  padding: 0 2px;
}

.pick {
  display: flex;
  align-items: flex-start;
  gap: 8px;
  margin-bottom: 13px;
}

.listbox {
  display: flex;
  width: 278px;
  height: 145px;
  border: 1px solid;
  border-color: #848284 #fff #fff #848284;
  background: #fff;
  box-shadow: inset 1px 1px #424142;
}

.listbox ul {
  flex: 1;
  padding: 2px 0 0 1px;
  overflow: hidden;
}

.listbox li {
  padding-left: 2px;
  line-height: 13px;
  white-space: nowrap;
}

.listbox li[aria-selected="true"] {
  background: #08246b;
  color: #fff;
}

.listbox .vscroll {
  margin-top: 1px;
}

.listbox .thumb {
  height: 23px;
  margin: auto 0 14px;
}

.swatchbox {
  display: flex;
  flex-direction: column;
  gap: 6px;
  width: 87px;
  padding: 4px;
  border: 1px solid #424142;
}

.swatch {
  height: 47px;
  background: #000;
}

.swatchbox .btn {
  margin: 0 1px;
}

.field {
  display: flex;
  align-items: center;
  margin: 0 0 14px 6px;
}

.field label {
  width: 172px;
}

.combo {
  position: relative;
  display: block;
  width: 161px;
}

.combo select {
  display: block;
  width: 100%;
  height: 21px;
  padding: 0 3px;
  border: 1px solid;
  border-color: #848284 #fff #fff #848284;
  border-radius: 0;
  background: #fff;
  box-shadow: inset 1px 1px #424142;
  color: #000;
  font: inherit;
  appearance: none;
}

.combo::before {
  position: absolute;
  top: 2px;
  right: 1px;
  bottom: 1px;
  width: 16px;
  border: 1px solid;
  border-color: #fff #424142 #424142 #fff;
  background: #d6d3ce;
  box-shadow: inset -1px -1px #848284;
  content: "";
  pointer-events: none;
}

.combo .dn {
  position: absolute;
  top: 9px;
  right: 5px;
  pointer-events: none;
}

.actions {
  display: flex;
  gap: 17px;
  margin: -2px 0 0 3px;
}

.actions .btn:first-child {
  width: 173px;
}

.actions .btn {
  width: 153px;
}

.schemelabel {
  margin: 17px 0 2px;
}

.scheme {
  display: flex;
  gap: 13px;
}

.scheme .combo {
  width: 203px;
  height: 21px;
}

.checks {
  margin: 2px 0;
}

.checks label {
  position: relative;
  display: flex;
  align-items: center;
  gap: 5px;
  height: 21px;
}

.checks input {
  width: 13px;
  height: 13px;
  margin: 0;
  border: 1px solid;
  border-color: #848284 #fff #fff #848284;
  background: #fff;
  box-shadow: inset 1px 1px #424142;
  appearance: none;
}

.checks input:checked {
  background: #fff url("data:image/svg+xml,%3Csvg xmlns='http://www.w3.org/2000/svg' viewBox='0 0 11 11'%3E%3Cpath d='M2.5 5l2 2.5 4-4.5' fill='none' stroke='%23000' stroke-width='2'/%3E%3C/svg%3E");
}

/* red ring round the option */
.marked::after {
  position: absolute;
  top: -4px;
  left: -16px;
  z-index: 1;
  width: 42px;
  height: 29px;
  border: 3px solid #f00010;
  border-radius: 50%;
  content: "";
  pointer-events: none;
}

.goto {
  width: 147px;
}

.dlgfoot {
  display: flex;
  justify-content: flex-end;
  gap: 10px;
  margin: 18px 13px 0 0;
}
</style>
